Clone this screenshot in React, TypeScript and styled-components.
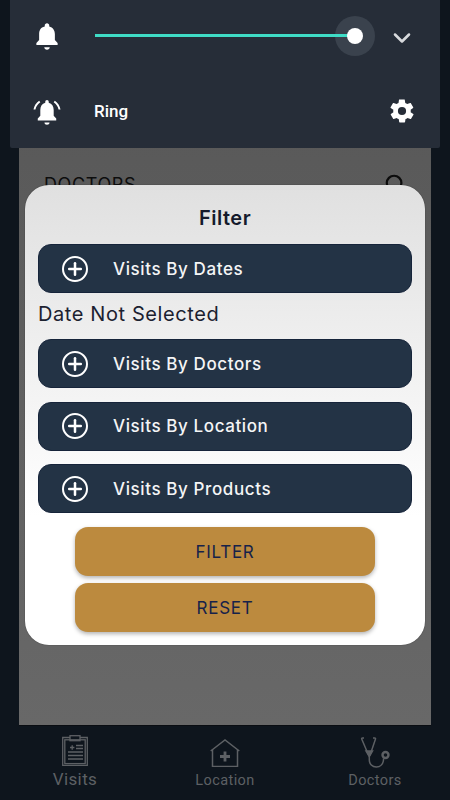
import * as React from "react"
import styled, { createGlobalStyle } from "styled-components"
import { ChevronDown, Search, Plus } from "lucide-react"

const GlobalStyle = createGlobalStyle`
    html, body {
        margin: 0;
        padding: 0;
        background: #0e151d;
    }
    * {
        box-sizing: border-box;
    }
`

const filters = ["Visits By Doctors", "Visits By Location", "Visits By Products"]

const BellSolid = () => (
    <svg width="32" height="30" viewBox="0 0 24 24" fill="#fff" preserveAspectRatio="none">
        <path d="M12 23c1.2 0 2.2-.9 2.2-2h-4.400c0 1.100 1 2 2.200 2zm8.500-5.500-2.200-2.300V10.500c0-3-1.600-5.500-4.500-6.200v-.8c0-1-.8-1.800-1.800-1.800s-1.800.8-1.800 1.800v.8C6.800 5 5.700 7.500 5.700 10.500v4.700l-2.200 2.300v1.700h17z" />
    </svg>
)

const BellRinging = () => (
    <svg width="31" height="29" viewBox="0 0 26 24" fill="#fff">
        <path d="M13 23.500c1.200 0 2.200-.9 2.200-2h-4.400c0 1.100 1 2 2.200 2zm8-5.500-2.200-2.300v-5c0-3-1.500-5.500-4.300-6.200v-.8c0-.9-.7-1.600-1.500-1.600s-1.500.7-1.500 1.600v.8C8.700 5.200 7.200 7.700 7.200 10.700v5L5 18v1.700h16z" />
        <path d="M6.200 2.600C3.600 4.400 1.800 7.100 1.300 10.300h1.700c.5-2.600 2-4.800 4.200-6.300zM19.800 2.600l-1 1.400c2.200 1.500 3.700 3.700 4.200 6.300h1.700c-.5-3.200-2.300-5.900-4.900-7.700z" />
    </svg>
)

const GearSolid = () => (
    <svg width="28" height="28" viewBox="0 0 24 24" fill="#fff">
        <path d="M19.400 13c.1-.3.100-.7.100-1s0-.7-.1-1l2.100-1.600c.2-.2.200-.4.100-.6l-2-3.500c-.1-.2-.4-.3-.6-.2l-2.500 1c-.5-.4-1.100-.7-1.700-1l-.4-2.600c0-.3-.2-.4-.5-.4h-4c-.3 0-.5.100-.5.400l-.4 2.600c-.6.300-1.200.6-1.700 1l-2.500-1c-.2-.1-.5 0-.6.200l-2 3.500c-.1.200-.1.400.1.600L4.600 11c-.1.300-.1.700-.1 1s0 .7.100 1l-2.100 1.600c-.2.200-.2.400-.1.600l2 3.500c.1.200.4.300.6.200l2.500-1c.5.400 1.100.7 1.700 1l.4 2.600c0 .3.200.4.500.4h4c.3 0 .5-.1.500-.4l.4-2.600c.6-.3 1.200-.6 1.700-1l2.500 1c.2.100.5 0 .6-.2l2-3.500c.1-.2.100-.4-.1-.6zM12 15.500a3.500 3.500 0 1 1 0-7 3.500 3.500 0 0 1 0 7z" />
    </svg>
)

const VisitsIcon = () => (
    <svg width="28" height="31" viewBox="0 0 28 31" fill="none" stroke="#5d6064" strokeWidth="1.300">
        <path d="M9 2.500H1.700v28h24.600v-28H19" />
        <rect x="3.800" y="4.800" width="20.400" height="23.800" />
        <rect x="9" y=".7" width="10" height="5" />
        <path d="M9 12.500h4.400M11.200 10.300v4.400M15 10.500h7M15 13.500h7M7 17h15M7 20.500h15M7 24h15" />
    </svg>
)

const LocationIcon = () => (
    <svg width="30" height="28" viewBox="0 0 30 28" fill="none" stroke="#5d6064" strokeWidth="1.500">
        <path d="M.7 12 15 1l14.300 11" />
        <path d="M2.500 10.500v17h25v-17" />
        <path d="M15 12.500v10M10 17.500h10" strokeWidth="2.800" />
    </svg>
)

const DoctorsIcon = () => (
    <svg width="30" height="31" viewBox="0 0 30 31" fill="none" stroke="#5d6064" strokeWidth="1.500">
        <path d="M4 1H2.500c-.6 0-1 .5-.8 1L8.500 18c.4.800 1.200.800 1.600 0L15.500 2c.2-.5-.2-1-.8-1H13" />
        <path d="M9.300 18v5c0 4 3 7 7 7s6.800-3 7.200-7v-1.500" />
        <circle cx="25.500" cy="18" r="3" strokeWidth="2.400" />
        <path d="M6 14h6.500l-3.200 5.500z" fill="#5d6064" />
    </svg>
)

export default function App() {
    return (
        <Page>
            <GlobalStyle />
            <Sheet>
                <SheetHeader>
                    <SheetTitle>DOCTORS</SheetTitle>
                    <Search size={22} strokeWidth={2.4} color="#0c0c0c" />
                </SheetHeader>
            </Sheet>
            <TabBar>
                <Tab>
                    <TabIcon $top>
                        <VisitsIcon />
                    </TabIcon>
                    <TabLabel $large>Visits</TabLabel>
                </Tab>
                <Tab>
                    <TabIcon>
                        <LocationIcon />
                    </TabIcon>
                    <TabLabel>Location</TabLabel>
                </Tab>
                <Tab>
                    <TabIcon>
                        <DoctorsIcon />
                    </TabIcon>
                    <TabLabel>Doctors</TabLabel>
                </Tab>
            </TabBar>

            <VolumePanel>
                <VolumeRow>
                    <IconSlot>
                        <BellSolid />
                    </IconSlot>
                    <Track>
                        <Thumb />
                    </Track>
                    <Chevron size={28} strokeWidth={2.2} color="#d8dadd" />
                </VolumeRow>
                <RingRow>
                    <IconSlot>
                        <BellRinging />
                    </IconSlot>
                    <RingLabel>Ring</RingLabel>
                    <GearSolid />
                </RingRow>
            </VolumePanel>

            <Modal>
                <ModalTitle>Filter</ModalTitle>
                <FilterRow>
                    <PlusCircle>
                        <PlusMark size={20} strokeWidth={3} color="#fff" />
                    </PlusCircle>
                    <FilterLabel>Visits By Dates</FilterLabel>
                </FilterRow>
                <DateNote>Date Not Selected</DateNote>
                <FilterList>
                    {filters.map((f) => (
                        <FilterRow key={f}>
                            <PlusCircle>
                                <PlusMark size={20} strokeWidth={3} color="#fff" />
                            </PlusCircle>
                            <FilterLabel>{f}</FilterLabel>
                        </FilterRow>
                    ))}
                </FilterList>
                <Actions>
                    <ActionButton>FILTER</ActionButton>
                    <ActionButton>RESET</ActionButton>
                </Actions>
            </Modal>
        </Page>
    )
}

const Page = styled.div`
    position: relative;
    width: 450px;
    height: 800px;
    overflow: hidden;
    display: flex;
    flex-direction: column;
    background: #0e151d;
    font-family: Inter, sans-serif;
`

const Sheet = styled.div`
    flex: 1;
    margin: 0 19px;
    padding: 173px 25px 0;
    background: linear-gradient(180deg, #565656 0%, #686868 100%);
    border-bottom: 1px solid #0a0d12;
`

const SheetHeader = styled.div`
    display: flex;
    align-items: center;
    justify-content: space-between;
`

const SheetTitle = styled.div`
    font-size: 18px;
    color: #0d0d0d;
    letter-spacing: 0.6px;
`

const TabBar = styled.div`
    height: 74px;
    display: grid;
    grid-template-columns: repeat(3, 1fr);
`

const Tab = styled.div`
    padding-top: 9px;
    display: flex;
    flex-direction: column;
    align-items: center;
`

const TabIcon = styled.div<{ $top?: boolean }>`
    height: 35px;
    display: flex;
    align-items: ${(p) => (p.$top ? "flex-start" : "center")};
`

const TabLabel = styled.span<{ $large?: boolean }>`
    margin-top: ${(p) => (p.$large ? "0" : "2px")};
    font-family: Roboto, sans-serif;
    font-size: ${(p) => (p.$large ? "17px" : "14.5px")};
    line-height: 18px;
    letter-spacing: 0.4px;
    color: #5d6064;
`

const VolumePanel = styled.div`
    position: absolute;
    top: 0;
    left: 10px;
    width: 430px;
    height: 148px;
    background: #262d38;
    border-radius: 0 0 2px 2px;
    padding: 16px 24px 0 22px;
`

const VolumeRow = styled.div`
    height: 40px;
    display: flex;
    align-items: center;
    justify-content: space-between;
    gap: 33px;
`

const RingRow = styled.div`
    margin-top: 35px;
    height: 40px;
    display: flex;
    align-items: center;
    gap: 32px;
`

const IconSlot = styled.div`
    width: 30px;
    display: flex;
    justify-content: center;
`

// the halo sits under the line, the thumb over it
const Track = styled.div`
    position: relative;
    isolation: isolate;
    width: 260px;
    height: 3px;
    margin: -1px auto 0 0;

    &::before {
        content: "";
        position: absolute;
        right: -20px;
        top: -18px;
        width: 40px;
        height: 40px;
        border-radius: 50%;
        background: #3a424d;
    }

    &::after {
        content: "";
        position: absolute;
        inset: 0;
        z-index: 1;
        background: #3fdcc6;
    }
`

const Thumb = styled.div`
    position: absolute;
    z-index: 2;
    right: -8px;
    top: -6px;
    width: 16px;
    height: 16px;
    border-radius: 50%;
    background: #fff;
`

const Chevron = styled(ChevronDown)`
    margin-top: 3px;
    flex-shrink: 0;
`

const RingLabel = styled.div`
    flex: 1;
    font-family: Roboto, sans-serif;
    font-size: 17px;
    font-weight: 500;
    color: #fff;
`

const Modal = styled.div`
    position: absolute;
    top: 185px;
    left: 25px;
    width: 400px;
    height: 460px;
    padding: 22px 13px 0;
    border-radius: 24px;
    background: linear-gradient(180deg, #e0e0e0 0%, #ffffff 72%);
    box-shadow: 0 0 1px #1c1c1c;
    display: flex;
    flex-direction: column;
`

const ModalTitle = styled.div`
    text-align: center;
    font-size: 20px;
    line-height: 23px;
    font-weight: 600;
    letter-spacing: 0.5px;
    color: #141a2c;
`

const FilterRow = styled.div`
    margin-top: 14px;
    height: 49px;
    display: flex;
    align-items: center;
    padding-left: 23px;
    gap: 25px;
    border-radius: 13px;
    border: 1px solid #16243a;
    background: #233345;
`

const FilterList = styled.div`
    display: flex;
    flex-direction: column;
    gap: 13.5px;

    ${FilterRow} {
        margin-top: 0;
    }
`

const PlusCircle = styled.div`
    width: 26px;
    height: 26px;
    flex-shrink: 0;
    border-radius: 50%;
    border: 2.5px solid #fff;
    display: flex;
    align-items: center;
    justify-content: center;
`

const PlusMark = styled(Plus)`
    flex-shrink: 0;
`

const FilterLabel = styled.span`
    font-size: 17px;
    font-weight: 500;
    letter-spacing: 0.6px;
    color: #f4f5f6;
`

const DateNote = styled.div`
    height: 46px;
    line-height: 42px;
    font-size: 20px;
    letter-spacing: 0.6px;
    color: #1b2130;
`

const Actions = styled.div`
    margin-top: 14px;
    display: flex;
    flex-direction: column;
    align-items: center;
    gap: 7px;
`

const ActionButton = styled.button`
    width: 300px;
    height: 49px;
    border: none;
    border-radius: 13px;
    background: #bc8a3e;
    box-shadow: 0 2px 4px rgba(0, 0, 0, 0.3);
    font-family: Inter, sans-serif;
    font-size: 17px;
    letter-spacing: 0.7px;
    color: #16224a;
`
